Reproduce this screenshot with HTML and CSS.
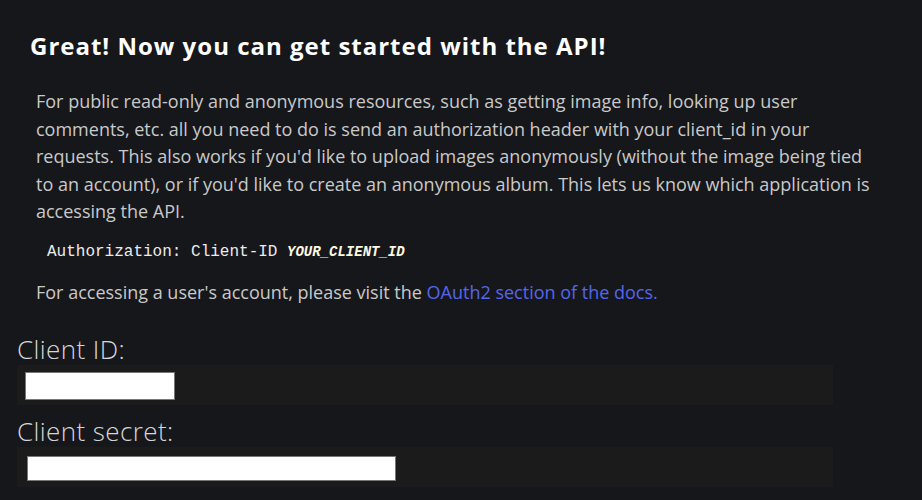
FILE: index.html
```html
<!DOCTYPE html>
<html>
<head>
<meta charset="utf-8">
<link rel="stylesheet" href="styles.css">
</head>
<body>
<div class="page">
  <h1 class="title">Great! Now you can get started with the API!</h1>
  <div class="intro">
    <p class="text">For public read-only and anonymous resources, such as getting image info, looking up user comments, etc. all you need to do is send an authorization header with your client_id in your requests. This also works if you'd like to upload images anonymously (without the image being tied to an account), or if you'd like to create an anonymous album. This lets us know which application is accessing the API.</p>
    <pre class="code">Authorization: Client-ID <em class="var">YOUR_CLIENT_ID</em></pre>
    <p class="text">For accessing a user's account, please visit the <a class="link" href="#">OAuth2 section of the docs.</a></p>
  </div>
  <div class="field">
    <div class="label">Client ID:</div>
    <div class="box"><span class="value value-id"></span></div>
  </div>
  <div class="field">
    <div class="label">Client secret:</div>
    <div class="box box-secret"><span class="value value-secret"></span></div>
  </div>
</div>
</body>
</html>
```
FILE: styles.css
```css
html, body {
  margin: 0;
  padding: 0;
  background: #16171b;
}
body {
  font-family: "Open Sans", "Noto Sans", sans-serif;
  color: #cfcfcf;
}
.page {
  padding: 0 89px 0 17px;
}
.title {
  margin: 0;
  padding: 30px 0 0 13px;
  font-size: 24px;
  font-weight: 700;
  letter-spacing: 1px;
  line-height: 32px;
  color: #ffffff;
}
.intro {
  padding: 26px 0 0 19px;
  width: 842px;
}
.text {
  margin: 0;
  font-size: 18px;
  line-height: 27.5px;
  color: #c9c9c9;
}
.code {
  margin: 16px 0 17px 11px;
  font-family: "Liberation Mono", monospace;
  font-size: 16px;
  line-height: 20px;
  color: #ececec;
}
.var {
  font-style: italic;
  font-weight: 700;
  font-size: 14px;
  color: #fff8e0;
}
.link {
  color: #5466ec;
  text-decoration: none;
}
.field {
  display: flex;
  flex-direction: column;
}
.label {
  font-size: 26px;
  font-weight: 300;
  letter-spacing: 0.4px;
  line-height: 32px;
  color: #d6d6d6;
}
.intro + .field {
  margin-top: 27px;
}
.box {
  width: 816px;
  background: #1b1b1b;
  height: 40px;
  padding: 7px 8px;
  box-sizing: border-box;
  margin-bottom: 10px;
}
.box-secret {
  padding: 9px 10px;
}
.value {
  display: block;
  background: #ffffff;
  border: 1px solid #777;
  box-sizing: border-box;
}
.value-id {
  width: 150px;
  height: 28px;
}
.value-secret {
  width: 369px;
  height: 25px;
}
```
